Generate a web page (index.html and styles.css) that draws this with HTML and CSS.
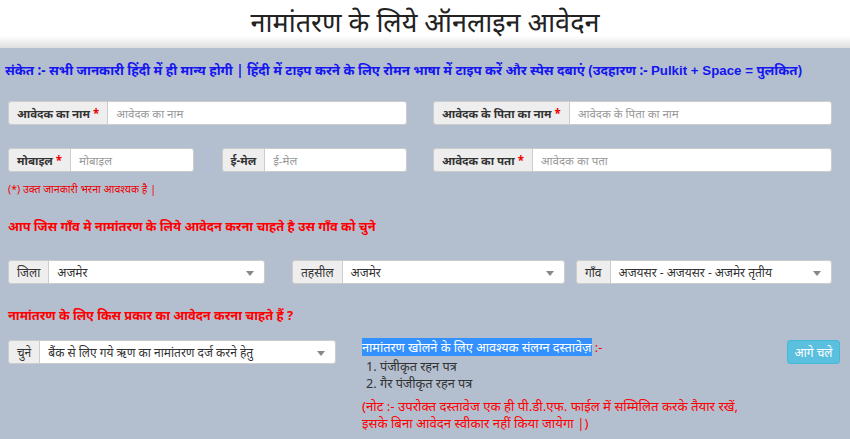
FILE: index.html
```html
<!DOCTYPE html>
<html lang="hi">
<head>
    <meta charset="UTF-8">
    <title>नामांतरण के लिये ऑनलाइन आवेदन</title>
    <link rel="stylesheet" href="styles.css">
</head>
<body>
    <div class="header">
        <h1>नामांतरण के लिये ऑनलाइन आवेदन</h1>
    </div>
    <div class="main">
        <p class="hint">संकेत :- सभी जानकारी हिंदी में ही मान्य होगी | हिंदी में टाइप करने के लिए रोमन भाषा में टाइप करें और स्पेस दबाएं (उदहारण :- <span class="latin">Pulkit + Space =</span> पुलकित)</p>

        <div class="row row-first">
            <div class="group half">
                <span class="addon">आवेदक का नाम <i>*</i></span>
                <input class="field" type="text" placeholder="आवेदक का नाम">
            </div>
            <div class="group half">
                <span class="addon">आवेदक के पिता का नाम <i>*</i></span>
                <input class="field" type="text" placeholder="आवेदक के पिता का नाम">
            </div>
        </div>

        <div class="row row-second">
            <div class="half split">
                <div class="group">
                    <span class="addon">मोबाइल <i>*</i></span>
                    <input class="field" type="text" placeholder="मोबाइल">
                </div>
                <div class="group">
                    <span class="addon">ई-मेल</span>
                    <input class="field" type="text" placeholder="ई-मेल">
                </div>
            </div>
            <div class="group half">
                <span class="addon">आवेदक का पता <i>*</i></span>
                <input class="field" type="text" placeholder="आवेदक का पता">
            </div>
        </div>

        <p class="required">(*) उक्त जानकारी भरना आवश्यक है |</p>

        <h3 class="question">आप जिस गाँव मे नामांतरण के लिये आवेदन करना चाहते है उस गाँव को चुने</h3>

        <div class="row-three">
            <div class="group g-district">
                <span class="addon plain">जिला</span>
                <div class="select">अजमेर</div>
            </div>
            <div class="group g-tehsil">
                <span class="addon plain">तहसील</span>
                <div class="select">अजमेर</div>
            </div>
            <div class="group g-village">
                <span class="addon plain">गाँव</span>
                <div class="select">अजयसर - अजयसर - अजमेर तृतीय</div>
            </div>
        </div>

        <h3 class="question q2">नामांतरण के लिए किस प्रकार का आवेदन करना चाहते हैं ?</h3>

        <div class="row-last">
            <div class="group g-type">
                <span class="addon plain">चुने</span>
                <div class="select">बैंक से लिए गये ऋण का नामांतरण दर्ज करने हेतु</div>
            </div>
            <div class="docs">
                <div class="docs-title"><span class="selected">नामांतरण खोलने के लिए आवश्यक संलग्न दस्तावेज़</span> :-</div>
                <ol>
                    <li>पंजीकृत रहन पत्र</li>
                    <li>गैर पंजीकृत रहन पत्र</li>
                </ol>
                <p class="note">(नोट :- उपरोक्त दस्तावेज एक ही पी.डी.एफ. फाईल में सम्मिलित करके तैयार रखें,<br>इसके बिना आवेदन स्वीकार नहीं किया जायेगा |)</p>
            </div>
            <button class="button">आगे चले</button>
        </div>
    </div>
</body>
</html>
```

FILE: styles.css
```css
body {
    margin: 0;
    font-family: 'Noto Sans', 'Liberation Sans', sans-serif;
    background: #b3bfcf;
    color: #333;
    height: 439px;
    overflow: hidden;
}
.header {
    height: 48px;
    background: linear-gradient(to bottom, #fff 0, #fff 36px, #dedede 48px);
    text-align: center;
}
h1 {
    margin: 0;
    font-size: 27px;
    font-weight: normal;
    line-height: 44px;
    color: #222;
}
.main {
    padding: 0 18px 0 8px;
}
.hint {
    margin: 13px 0 0 -3px;
    font-size: 13.3px;
    font-weight: bold;
    color: #1515f0;
    white-space: nowrap;
}
.latin {
    font-family: 'Liberation Sans', sans-serif;
}
.row {
    display: flex;
    gap: 26px;
}
.row-first {
    margin-top: 22px;
}
.row-second {
    margin-top: 23px;
}
.half {
    flex: 1 1 0;
    min-width: 0;
}
.split {
    display: flex;
    gap: 28px;
}
.split .group {
    flex: 1 1 0;
    min-width: 0;
}
.group {
    display: flex;
    height: 24px;
    font-size: 11.5px;
}
.addon {
    display: flex;
    align-items: center;
    padding: 0 8px;
    background: #eee;
    border: 1px solid #ccc;
    border-right: none;
    border-radius: 3px 0 0 3px;
    font-weight: bold;
    white-space: nowrap;
}
.addon i {
    font-style: normal;
    color: #e00;
    margin-left: 3px;
}
.addon.plain {
    font-weight: normal;
    font-size: 12px;
    color: #333;
}
.field {
    flex: 1;
    min-width: 0;
    box-sizing: border-box;
    height: 24px;
    padding: 0 8px;
    border: 1px solid #ccc;
    border-radius: 0 3px 3px 0;
    font-family: inherit;
    font-size: 11.5px;
    background: #fff;
}
.field::placeholder {
    color: #999;
}
.required {
    margin: 10px 0 0;
    font-size: 10.6px;
    color: #e00;
}
.question {
    margin: 21px 0 0;
    font-size: 12.8px;
    font-weight: bold;
    color: #f00;
}
.q2 {
    margin-top: 22px;
}
.row-three {
    display: flex;
    margin-top: 25px;
}
.g-district {
    width: 257px;
}
.g-tehsil {
    width: 273px;
    margin-left: 27px;
}
.g-village {
    width: 256px;
    margin-left: 11px;
}
.select {
    flex: 1;
    position: relative;
    display: flex;
    align-items: center;
    padding: 0 8px;
    background: #fff;
    border: 1px solid #ccc;
    border-radius: 0 3px 3px 0;
    white-space: nowrap;
    font-size: 12px;
    color: #333;
}
.select::after {
    content: "";
    position: absolute;
    right: 10px;
    top: 10px;
    border-left: 4px solid transparent;
    border-right: 4px solid transparent;
    border-top: 5px solid #888;
}
.row-last {
    display: flex;
    align-items: flex-start;
    margin-top: 16px;
}
.g-type {
    width: 328px;
}
.docs {
    margin-left: 26px;
    flex: 1;
    font-size: 12.7px;
}
.docs-title {
    color: #f00;
    line-height: 17px;
    margin-top: -1px;
}
.selected {
    background: #3390ff;
    color: #fff;
}
.docs ol {
    margin: 2px 0 0;
    padding-left: 18px;
    color: #333;
    line-height: 17px;
}
.note {
    margin: 6px 0 0;
    font-size: 13.2px;
    color: #f00;
    line-height: 17px;
}
.button {
    width: 53px;
    height: 24px;
    margin-right: -8px;
    padding: 0;
    background: #5bc0de;
    border: 1px solid #46b8da;
    border-radius: 3px;
    color: #fff;
    font-family: inherit;
    font-size: 12px;
}
```
